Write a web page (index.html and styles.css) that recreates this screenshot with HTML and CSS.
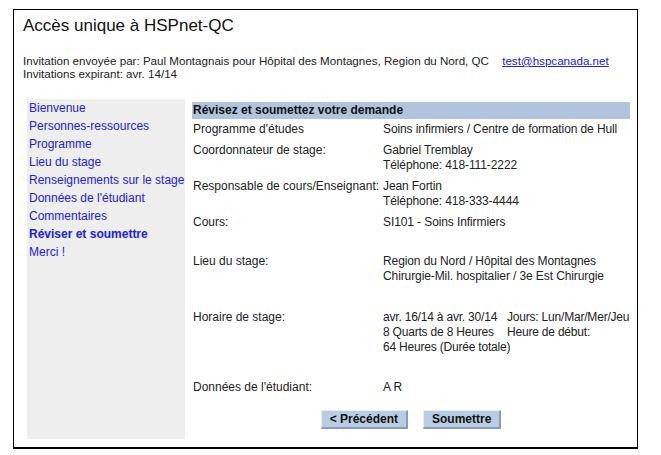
FILE: index.html
```html
<!DOCTYPE html>
<html lang="fr">
<head>
  <meta charset="UTF-8" />
  <title>Accès unique à HSPnet-QC</title>
  <link rel="stylesheet" href="styles.css">
</head>
<body>
  <div class="frame">
    <h1>Accès unique à HSPnet-QC</h1>
    <p class="invite">
      Invitation envoyée par: Paul Montagnais pour Hôpital des Montagnes, Region du Nord, QC
      <a href="#" class="mail">test@hspcanada.net</a><br>
      Invitations expirant: avr. 14/14
    </p>

    <div class="layout">
      <!-- ===== Left menu ===== -->
      <ul class="sidebar">
        <li><a href="#">Bienvenue</a></li>
        <li><a href="#">Personnes-ressources</a></li>
        <li><a href="#">Programme</a></li>
        <li><a href="#">Lieu du stage</a></li>
        <li><a href="#">Renseignements sur le stage</a></li>
        <li><a href="#">Données de l'étudiant</a></li>
        <li><a href="#">Commentaires</a></li>
        <li><a href="#" class="current">Réviser et soumettre</a></li>
        <li><a href="#">Merci !</a></li>
      </ul>

      <!-- ===== Review ===== -->
      <div class="main">
        <div class="bar">Révisez et soumettez votre demande</div>

        <div class="row">
          <div class="label">Programme d'études</div>
          <div class="value">Soins infirmiers / Centre de formation de Hull</div>
        </div>
        <div class="row">
          <div class="label">Coordonnateur de stage:</div>
          <div class="value">Gabriel Tremblay<br>Téléphone: 418-111-2222</div>
        </div>
        <div class="row">
          <div class="label">Responsable de cours/Enseignant:</div>
          <div class="value">Jean Fortin<br>Téléphone: 418-333-4444</div>
        </div>
        <div class="row">
          <div class="label">Cours:</div>
          <div class="value">SI101 - Soins Infirmiers</div>
        </div>
        <div class="gap"></div>
        <div class="row">
          <div class="label">Lieu du stage:</div>
          <div class="value">Region du Nord / Hôpital des Montagnes<br>Chirurgie-Mil. hospitalier / 3e Est Chirurgie</div>
        </div>
        <div class="gap gap-lg"></div>
        <div class="row">
          <div class="label">Horaire de stage:</div>
          <div class="value schedule">
            <span>avr. 16/14 à avr. 30/14</span><span>Jours: Lun/Mar/Mer/Jeu</span>
            <span>8 Quarts de 8 Heures</span><span>Heure de début:</span>
            <span class="wide">64 Heures (Durée totale)</span>
          </div>
        </div>
        <div class="gap gap-md"></div>
        <div class="row">
          <div class="label">Données de l'étudiant:</div>
          <div class="value">A R</div>
        </div>

        <div class="actions">
          <button class="btn">&lt; Précédent</button>
          <button class="btn">Soumettre</button>
        </div>
      </div>
    </div>
  </div>
</body>
</html>
```

FILE: styles.css
```css
/* ===== Base ===== */
* {
  box-sizing: border-box;
}
body {
  margin: 0;
  padding: 9px 0 0 13px;
  background: #fff;
  font-family: "Liberation Sans", Arial, sans-serif;
  font-size: 12px;
  color: #222;
}
a {
  color: #2020e0;
  text-decoration: none;
}

/* ===== Frame ===== */
.frame {
  width: 625px;
  border: 1px solid #000;
  border-bottom-width: 2px;
  padding: 6px 7px 8px 9px;
}
.frame h1 {
  margin: 0;
  font-size: 17px;
  line-height: 20px;
  font-weight: normal;
  color: #111;
}
.invite {
  margin: 18px 0 0;
  font-size: 11.6px;
  line-height: 13px;
}
.invite .mail {
  margin-left: 10px;
  text-decoration: underline;
}

/* ===== Layout ===== */
.layout {
  display: flex;
  gap: 7px;
  margin: 19px 0 0 4px;
}
.sidebar {
  flex: none;
  list-style: none;
  margin: 0;
  padding: 0 0 0 2px;
  width: 158px;
  background: #eeeeee;
  line-height: 18px;
  white-space: nowrap;
}
.sidebar .current {
  font-weight: bold;
}
.main {
  flex: 1;
  min-width: 0;
  padding: 3px 0 10px;
}
.bar {
  height: 17px;
  line-height: 17px;
  padding-left: 1px;
  background: #b0c4de;
  font-weight: bold;
  color: #111;
}
.row {
  display: grid;
  grid-template-columns: 190px minmax(0, 1fr);
  padding: 3px 0 3px 1px;
  line-height: 15px;
}
.value {
  letter-spacing: -0.1px;
  white-space: nowrap;
}
.gap {
  height: 18px;
}
.gap-lg {
  height: 20px;
}
.gap-md {
  height: 19px;
}
.schedule {
  display: grid;
  grid-template-columns: 124px auto;
  letter-spacing: -0.2px;
}
.schedule .wide {
  grid-column: 1 / 3;
}

/* ===== Buttons ===== */
.actions {
  display: flex;
  justify-content: center;
  gap: 15px;
  margin-top: 12px;
}
.btn {
  height: 19px;
  padding: 0 8px;
  font-family: inherit;
  font-size: 12px;
  font-weight: bold;
  color: #111;
  background: #b8cce4;
  border: 1px solid #e8eef6;
  border-right: 2px solid #8c9cb2;
  border-bottom: 2px solid #8c9cb2;
}
```
